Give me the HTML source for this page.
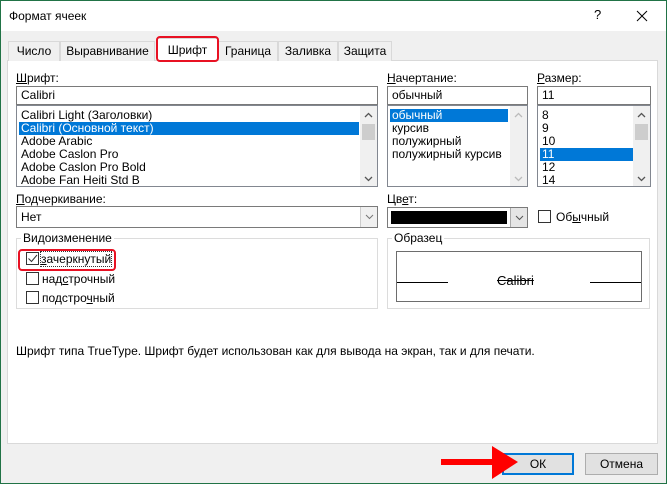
<!DOCTYPE html>
<html><head><meta charset="utf-8"><style>
*{box-sizing:border-box;margin:0;padding:0}
body{width:667px;height:484px;overflow:hidden;background:#f0f0f0;font-family:"Liberation Sans",sans-serif;font-size:12px;color:#000;position:relative}
.a{position:absolute}
.win{left:0;top:0;width:667px;height:484px;border:1px solid #217346}
.title{left:1px;top:1px;width:665px;height:30px;background:#fff}
.panel{left:7px;top:60px;width:651px;height:384px;background:#fff;border:1px solid #d9d9d9}
.tab{top:41px;height:20px;border:1px solid #d9d9d9;border-bottom:none;background:#f0f0f0;text-align:center;line-height:19px;font-size:12px}
.inp{background:#fff;border:1px solid #7a7a7a;padding-left:4px;line-height:16px}
.list{background:#fff;border:1px solid #828790}
.it{position:absolute;left:2px;height:13px;line-height:13px;padding-left:2px}
.sel{background:#0078d7;color:#fff}
.sb{position:absolute;right:0;top:0;width:17px;height:100%;background:#f0f0f0}
.cb{width:13px;height:13px;border:1px solid #333;background:#fff}
u{text-decoration:underline}
</style></head><body>
<div class="a win"></div>
<div class="a title"></div>
<div class="a" style="left:9px;top:9px;font-size:12px">Формат ячеек</div>
<div class="a" style="left:594px;top:7px;font-size:13px">?</div>
<svg class="a" style="left:636px;top:10px" width="12" height="12"><path d="M1 1L11 11M11 1L1 11" stroke="#000" stroke-width="1"/></svg>

<div class="a panel"></div>
<div class="a tab" style="left:8px;width:52px">Число</div>
<div class="a tab" style="left:60px;width:95px">Выравнивание</div>
<div class="a tab" style="left:157px;width:61px;background:#fff;top:38px;height:23px;line-height:22px">Шрифт</div>
<div class="a tab" style="left:218px;width:60px">Граница</div>
<div class="a tab" style="left:278px;width:60px">Заливка</div>
<div class="a tab" style="left:338px;width:54px">Защита</div>
<div class="a" style="left:156px;top:36px;width:63px;height:26px;border:2px solid #e81123;border-radius:4px"></div>

<div class="a" style="left:16px;top:71px"><u>Ш</u>рифт:</div>
<div class="a inp" style="left:16px;top:86px;width:362px;height:19px">Calibri</div>
<div class="a list" style="left:16px;top:105px;width:362px;height:82px">
<div class="it" style="top:3px">Calibri Light (Заголовки)</div>
<div class="it sel" style="top:16px;width:340px">Calibri (Основной текст)</div>
<div class="it" style="top:29px">Adobe Arabic</div>
<div class="it" style="top:42px">Adobe Caslon Pro</div>
<div class="it" style="top:55px">Adobe Caslon Pro Bold</div>
<div class="it" style="top:68px">Adobe Fan Heiti Std B</div>
<div class="sb"><div class="a" style="left:2px;top:18px;width:13px;height:16px;background:#cdcdcd"></div>
<svg class="a" style="left:4px;top:6px" width="9" height="6"><path d="M1 5L4.5 1.5L8 5" stroke="#555" fill="none" stroke-width="1.3"/></svg>
<svg class="a" style="left:4px;top:70px" width="9" height="6"><path d="M1 1L4.5 4.5L8 1" stroke="#555" fill="none" stroke-width="1.3"/></svg></div>
</div>

<div class="a" style="left:387px;top:71px"><u>Н</u>ачертание:</div>
<div class="a inp" style="left:387px;top:86px;width:141px;height:19px">обычный</div>
<div class="a list" style="left:387px;top:105px;width:141px;height:82px">
<div class="it sel" style="top:3px;width:118px">обычный</div>
<div class="it" style="top:16px">курсив</div>
<div class="it" style="top:29px">полужирный</div>
<div class="it" style="top:42px">полужирный курсив</div>
<div class="sb">
<svg class="a" style="left:4px;top:6px" width="9" height="6"><path d="M1 5L4.5 1.5L8 5" stroke="#bbb" fill="none" stroke-width="1.3"/></svg>
<svg class="a" style="left:4px;top:70px" width="9" height="6"><path d="M1 1L4.5 4.5L8 1" stroke="#bbb" fill="none" stroke-width="1.3"/></svg></div></div>

<div class="a" style="left:537px;top:71px"><u>Р</u>азмер:</div>
<div class="a inp" style="left:537px;top:86px;width:114px;height:19px">11</div>
<div class="a list" style="left:537px;top:105px;width:114px;height:82px">
<div class="it" style="top:3px">8</div>
<div class="it" style="top:16px">9</div>
<div class="it" style="top:29px">10</div>
<div class="it sel" style="top:42px;width:93px">11</div>
<div class="it" style="top:55px">12</div>
<div class="it" style="top:68px">14</div>
<div class="sb"><div class="a" style="left:2px;top:18px;width:13px;height:16px;background:#cdcdcd"></div>
<svg class="a" style="left:4px;top:6px" width="9" height="6"><path d="M1 5L4.5 1.5L8 5" stroke="#555" fill="none" stroke-width="1.3"/></svg>
<svg class="a" style="left:4px;top:70px" width="9" height="6"><path d="M1 1L4.5 4.5L8 1" stroke="#555" fill="none" stroke-width="1.3"/></svg></div>
</div>

<div class="a" style="left:16px;top:192px"><u>П</u>одчеркивание:</div>
<div class="a inp" style="left:16px;top:206px;width:362px;height:22px;line-height:20px">Нет</div>
<div class="a" style="left:360px;top:207px;width:17px;height:20px;background:#f0f0f0;border-left:1px solid #ccc"><svg class="a" style="left:4px;top:7px" width="9" height="6"><path d="M1 1L4.5 4.5L8 1" stroke="#777" fill="none"/></svg></div>

<div class="a" style="left:387px;top:192px">Цв<u>е</u>т:</div>
<div class="a inp" style="left:387px;top:207px;width:141px;height:21px"></div>
<div class="a" style="left:391px;top:211px;width:116px;height:13px;background:#000"></div>
<div class="a" style="left:510px;top:208px;width:17px;height:19px;background:#e5e5e5;border-left:1px solid #aaa"><svg class="a" style="left:4px;top:7px" width="9" height="6"><path d="M1 1L4.5 4.5L8 1" stroke="#555" fill="none"/></svg></div>
<div class="a cb" style="left:538px;top:210px"></div>
<div class="a" style="left:556px;top:210px">Об<u>ы</u>чный</div>

<div class="a" style="left:16px;top:238px;width:362px;height:71px;border:1px solid #dcdcdc"></div>
<div class="a" style="left:21px;top:231px;background:#fff;padding:0 2px">Видоизменение</div>
<div class="a cb" style="left:26px;top:252px"></div>
<svg class="a" style="left:27px;top:253px" width="11" height="11"><path d="M1.5 5.5L4.5 8.5L10 2" stroke="#333" fill="none"/></svg>
<div class="a" style="left:41px;top:252px;outline:1px dotted #333"><u>з</u>ачеркнутый</div>
<div class="a cb" style="left:26px;top:272px"></div>
<div class="a" style="left:42px;top:272px">над<u>с</u>трочный</div>
<div class="a cb" style="left:26px;top:291px"></div>
<div class="a" style="left:42px;top:291px">подстро<u>ч</u>ный</div>
<div class="a" style="left:18px;top:249px;width:98px;height:22px;border:2px solid #e81123;border-radius:4px"></div>

<div class="a" style="left:387px;top:238px;width:263px;height:71px;border:1px solid #dcdcdc"></div>
<div class="a" style="left:392px;top:231px;background:#fff;padding:0 2px">Образец</div>
<div class="a" style="left:396px;top:251px;width:246px;height:51px;border:1px solid #6d6d6d"></div>
<div class="a" style="left:397px;top:282px;width:51px;height:1px;background:#000"></div>
<div class="a" style="left:590px;top:282px;width:51px;height:1px;background:#000"></div>
<div class="a" style="left:497px;top:273px;text-decoration:line-through;font-size:13px">Calibri</div>

<div class="a" style="left:16px;top:344px">Шрифт типа TrueType. Шрифт будет использован как для вывода на экран, так и для печати.</div>

<div class="a" style="left:502px;top:453px;width:72px;height:22px;border:2px solid #0078d7;background:#e1e1e1;text-align:center;line-height:18px">ОК</div>
<div class="a" style="left:585px;top:453px;width:73px;height:22px;border:1px solid #adadad;background:#e1e1e1;text-align:center;line-height:20px">Отмена</div>
<svg class="a" style="left:438px;top:445px" width="82" height="36"><path d="M3 14H54V1L80 17L54 34V20H3Z" fill="#f00"/></svg>
</body></html>
